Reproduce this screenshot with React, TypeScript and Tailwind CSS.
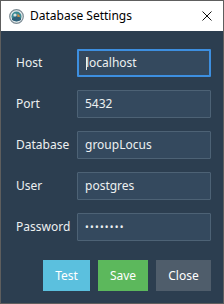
import React from "react";

const fields = [
  { label: "Host", value: "localhost", focused: true },
  { label: "Port", value: "5432" },
  { label: "Database", value: "groupLocus" },
  { label: "User", value: "postgres" },
  { label: "Password", value: "••••••••" },
];

function AppIcon() {
  return (
    <svg width="15" height="15" viewBox="0 0 15 15">
      <circle cx="7.5" cy="7.5" r="6.8" fill="#e9eef0" stroke="#7c8b93" strokeWidth="1.2" />
      <circle cx="7.5" cy="7.5" r="5" fill="#3a8a93" />
      <path d="M3 9.5 Q7.5 5 12 9.5 L12 11 Q7.5 13.5 3 11 Z" fill="#2f5f78" />
      <circle cx="6" cy="6" r="1.6" fill="#d9dfe2" />
      <path d="M8.5 4.5 L11.5 7.5 L8.5 8 Z" fill="#e08a3c" />
    </svg>
  );
}

export default function App() {
  return (
    <div
      className="flex h-[304px] w-[224px] flex-col border border-[#5e5e5e] bg-[#2c3e50]"
      style={{ fontFamily: '"Segoe UI", "Noto Sans", sans-serif' }}
    >
      <div className="flex h-[30px] items-center bg-white pl-[8px] pr-[10px]">
        <AppIcon />
        <span className="ml-[6px] flex-1 text-[12px] text-black">Database Settings</span>
        <svg width="10" height="10" viewBox="0 0 10 10" className="mr-[1px]">
          <path d="M0.5 0.5 L9.5 9.5 M9.5 0.5 L0.5 9.5" stroke="#111" strokeWidth="1" />
        </svg>
      </div>
      <div className="flex flex-col gap-[13px] pl-[15px] pr-[12px] pt-[18px]">
        {fields.map((f) => (
          <div key={f.label} className="flex items-center">
            <span className="w-[61px] text-[12px] text-[#ecf0f1]">{f.label}</span>
            <div
              className={`flex h-[28px] flex-1 items-center rounded-[1px] bg-[#34495e] px-[7px] text-[12px] text-[#ecf0f1] ${
                f.focused ? "border-2 border-[#3d8fe0] px-[6px]" : "border border-[#4d6275]"
              }`}
            >
              {f.focused && <span className="-mr-[1px] h-[13px] w-px bg-[#ecf0f1]" />}
              <span className={f.label === "Password" ? "text-[10px] tracking-[1.2px]" : ""}>{f.value}</span>
            </div>
          </div>
        ))}
      </div>
      <div className="mt-[19px] flex justify-end gap-[8px] pr-[12px]">
        <button className="h-[31px] w-[47px] bg-[#5bc0de] text-[12px] text-white">Test</button>
        <button className="h-[31px] w-[50px] bg-[#5cb85c] text-[12px] text-white">Save</button>
        <button className="h-[31px] w-[55px] bg-[#4f5d6b] text-[12px] text-white">Close</button>
      </div>
    </div>
  );
}
